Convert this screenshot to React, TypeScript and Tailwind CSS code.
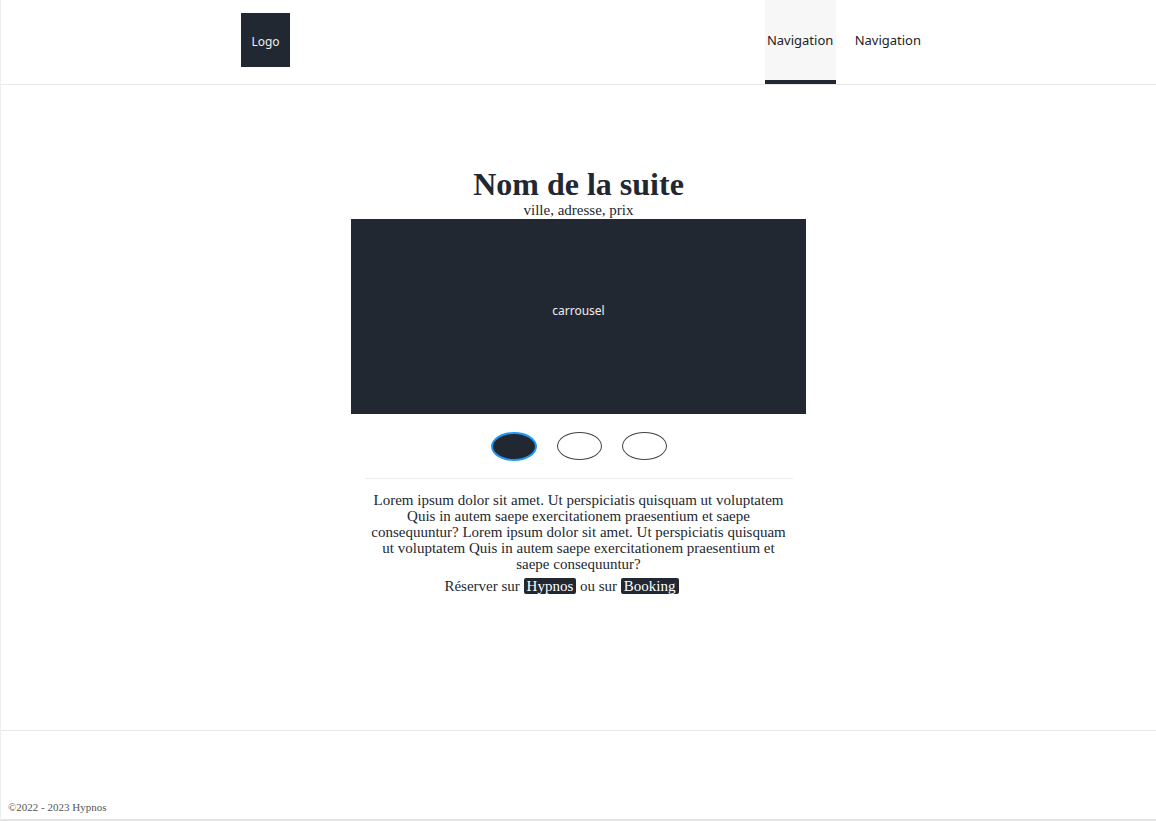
import React from 'react';

const serif = { fontFamily: '"Liberation Serif", "DejaVu Serif", serif' };

function Header() {
  return (
    <header className="h-[85px] border-b border-[#e8e8e8] flex items-stretch">
      <div className="w-[240px] shrink-0" />
      <div className="flex items-start pt-[13px]">
        <div className="w-[49px] h-[54px] bg-[#222831] text-[#eeeeee] text-[12px] flex items-center justify-center pt-[3px]">
          Logo
        </div>
      </div>
      <div className="flex-1" />
      <nav className="flex items-stretch text-[13px] text-[#222] mr-[216px]">
        <a className="relative flex items-center px-[3px] w-[71px] justify-center bg-[#f7f7f7] border-b-4 border-[#222831] pt-[1px]">
          Navigation
        </a>
        <a className="flex items-center px-[19px] pb-[3px]">Navigation</a>
      </nav>
    </header>
  );
}

function Dots() {
  return (
    <div className="flex justify-center gap-[20px] mt-[18px]">
      <button type="button" className="w-[46px] h-[29px] rounded-[50%] bg-[#222831] border-2 border-[#2196f3]" />
      <button type="button" className="w-[45px] h-[28px] rounded-[50%] bg-white border border-[#444]" />
      <button type="button" className="w-[45px] h-[28px] rounded-[50%] bg-white border border-[#444]" />
    </div>
  );
}

export default function App() {
  return (
    <div className="min-h-screen flex flex-col bg-white border-l border-[#eeeeee] text-[#222831]" style={{ fontFamily: '"Noto Sans", sans-serif' }}>
      <Header />

      <main className="h-[645px] flex flex-col items-center pt-[82px]" style={serif}>
        <h1 className="text-[32px] font-bold leading-[34px]">Nom de la suite</h1>
        <p className="text-[15px] leading-[17px] mt-[1px]">ville, adresse, prix</p>
        <div className="w-[455px] h-[195px] bg-[#222831] flex items-center justify-center pb-[12px] text-[12px] text-[#eeeeee]" style={{ fontFamily: '"Noto Sans", sans-serif' }}>
          carrousel
        </div>
        <Dots />
        <div className="w-[428px] border-t border-[#eeeeee] mt-[17px]" />
        <p className="w-[428px] text-center text-[15px] leading-[16px] mt-[13px]">
          Lorem ipsum dolor sit amet. Ut perspiciatis quisquam ut voluptatem Quis in autem saepe exercitationem praesentium et saepe consequuntur? Lorem ipsum dolor sit amet. Ut perspiciatis quisquam ut voluptatem Quis in autem saepe exercitationem praesentium et saepe consequuntur?
        </p>
        <p className="text-[15px] leading-[16px] mt-[6px] mr-[34px]">
          Réserver sur{' '}
          <a className="bg-[#222831] text-white rounded-[2px] px-[3px]">Hypnos</a>{' '}
          ou sur{' '}
          <a className="bg-[#222831] text-white rounded-[2px] px-[3px]">Booking</a>
        </p>
      </main>

      <footer className="flex-1 border-t border-[#e8e8e8] border-b-2 border-b-[#e4e4e4] flex items-end px-[7px] pb-[4px]" style={serif}>
        <p className="text-[11px] text-[#555]">©2022 - 2023 Hypnos</p>
      </footer>
    </div>
  );
}
